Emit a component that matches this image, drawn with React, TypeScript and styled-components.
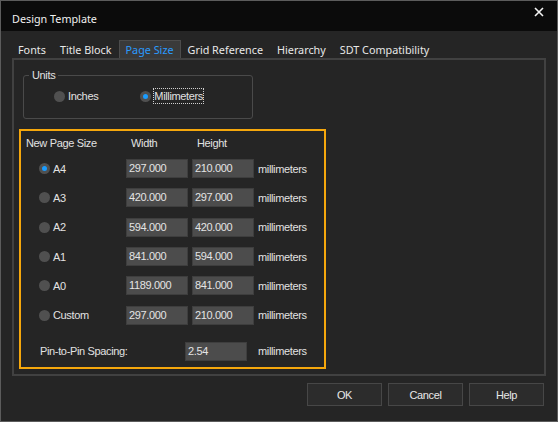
import React from 'react'
import styled, { createGlobalStyle } from 'styled-components'

const GlobalStyle = createGlobalStyle`
    html, body {
        margin: 0;
        padding: 0;
        background: #252525;
    }
`

const Window = styled.div`
    width: 558px;
    height: 422px;
    box-sizing: border-box;
    border: 1px solid #5c5c5c;
    background: #252525;
    display: flex;
    flex-direction: column;
    font-family: 'Liberation Sans', Arial, sans-serif;
    font-size: 11px;
    letter-spacing: -0.35px;
    color: #e2e2e2;
`

const TitleBar = styled.div`
    height: 30px;
    background: #0b0b0b;
    display: flex;
    align-items: center;
    justify-content: space-between;
    padding: 5px 12px 0 11px;
    box-sizing: border-box;
    font-family: 'Noto Sans', sans-serif;
    font-size: 10.8px;
    letter-spacing: 0;
    color: #f0f0f0;
`

const CloseButton = styled.div`
    width: 12px;
    height: 12px;
    margin-top: -14px;
    display: flex;
    align-items: center;
    justify-content: center;
`

const TabStrip = styled.div`
    display: flex;
    align-items: flex-end;
    height: 27px;
    padding-left: 10px;
    font-family: 'Noto Sans', sans-serif;
    font-size: 10.8px;
    letter-spacing: 0;
`

const Tab = styled.div<{ $active?: boolean }>`
    height: 18px;
    line-height: 17px;
    padding: 0 6px;
    box-sizing: border-box;
    color: ${p => (p.$active ? '#2a9bff' : '#e8e8e8')};
    background: ${p => (p.$active ? '#3a3a3a' : 'transparent')};
    border: 1px solid ${p => (p.$active ? '#4c4c4c' : 'transparent')};
    border-bottom: none;
`

const Panel = styled.div`
    margin: 0 11px 0 11px;
    height: 318px;
    box-sizing: border-box;
    border: 2px solid #414141;
    padding: 9px 0 0 5px;
`

const Group = styled.fieldset`
    margin: 0 0 0 4px;
    width: 230px;
    height: 50px;
    box-sizing: border-box;
    border: 1px solid #4a4a4a;
    border-radius: 3px;
    padding: 0;
    display: flex;
    align-items: center;
`

const Legend = styled.legend`
    padding: 0 3px;
    margin-left: 5px;
    color: #e2e2e2;
`

const RadioRow = styled.div<{ $left: number }>`
    display: flex;
    align-items: center;
    gap: 3px;
    margin: -7px 0 0 ${p => p.$left}px;
`

const RadioDot = styled.span<{ $checked?: boolean }>`
    width: 11px;
    height: 11px;
    border-radius: 50%;
    background: #505050;
    position: relative;
    flex-shrink: 0;
    &::after {
        content: '';
        display: ${p => (p.$checked ? 'block' : 'none')};
        position: absolute;
        left: 3px;
        top: 3px;
        width: 5px;
        height: 5px;
        border-radius: 50%;
        background: #1a9cff;
    }
`

const FocusLabel = styled.span`
    outline: 1px dotted #d0d0d0;
    padding: 1px 0;
`

const Frame = styled.div`
    margin-top: 10px;
    width: 307px;
    height: 240px;
    box-sizing: border-box;
    border: 2px solid #f5a70c;
`

const SizeGrid = styled.div`
    display: grid;
    grid-template-columns: 101px 62px 62px auto;
    column-gap: 4px;
    grid-template-rows: 23px;
    grid-auto-rows: 29.3px;
    align-items: center;
`

const HeadCell = styled.div<{ $pad: number }>`
    padding-left: ${p => p.$pad}px;
`

const SizeLabel = styled.div`
    display: flex;
    align-items: center;
    gap: 3px;
    padding-left: 18px;
`

const NumberBox = styled.div`
    width: 62px;
    height: 19px;
    box-sizing: border-box;
    background: #4c4c4c;
    border: 1px solid #3e3e3e;
    padding-left: 2px;
    line-height: 17px;
    color: #e4e4e4;
`

const Unit = styled.div<{ $gap?: number }>`
    margin-left: ${p => p.$gap ?? 0}px;
`

const PinRow = styled.div`
    display: flex;
    align-items: center;
    margin-top: 12px;
    padding-left: 19px;
`

const PinLabel = styled.div`
    width: 145px;
`

const ButtonBar = styled.div`
    display: flex;
    justify-content: flex-end;
    gap: 6px;
    padding: 7px 13px 0 0;
`

const Button = styled.div`
    width: 75px;
    height: 23px;
    box-sizing: border-box;
    background: #2c2c2c;
    border: 1px solid #474747;
    display: flex;
    align-items: center;
    justify-content: center;
    color: #e8e8e8;
`

const sizes = [
    { name: 'A4', w: '297.000', h: '210.000', checked: true },
    { name: 'A3', w: '420.000', h: '297.000' },
    { name: 'A2', w: '594.000', h: '420.000' },
    { name: 'A1', w: '841.000', h: '594.000' },
    { name: 'A0', w: '1189.000', h: '841.000' },
    { name: 'Custom', w: '297.000', h: '210.000' },
]

const tabs = ['Fonts', 'Title Block', 'Page Size', 'Grid Reference', 'Hierarchy', 'SDT Compatibility']

export default function App() {
    return (
        <>
            <GlobalStyle />
            <Window>
                <TitleBar>
                    <span>Design Template</span>
                    <CloseButton>
                        <svg width="10" height="10" viewBox="0 0 10 10">
                            <path d="M1 1 L9 9 M9 1 L1 9" stroke="#f4f4f4" strokeWidth="1.6" />
                        </svg>
                    </CloseButton>
                </TitleBar>
                <TabStrip>
                    {tabs.map(t => (
                        <Tab key={t} $active={t === 'Page Size'}>
                            {t}
                        </Tab>
                    ))}
                </TabStrip>
                <Panel>
                    <Group>
                        <Legend>Units</Legend>
                        <RadioRow $left={30}>
                            <RadioDot />
                            <span>Inches</span>
                        </RadioRow>
                        <RadioRow $left={42}>
                            <RadioDot $checked />
                            <FocusLabel>Millimeters</FocusLabel>
                        </RadioRow>
                    </Group>
                    <Frame>
                        <SizeGrid>
                            <HeadCell $pad={5}>New Page Size</HeadCell>
                            <HeadCell $pad={5}>Width</HeadCell>
                            <HeadCell $pad={5}>Height</HeadCell>
                            <div />
                            {sizes.map(s => (
                                <React.Fragment key={s.name}>
                                    <SizeLabel>
                                        <RadioDot $checked={s.checked} />
                                        <span>{s.name}</span>
                                    </SizeLabel>
                                    <NumberBox>{s.w}</NumberBox>
                                    <NumberBox>{s.h}</NumberBox>
                                    <Unit>millimeters</Unit>
                                </React.Fragment>
                            ))}
                        </SizeGrid>
                        <PinRow>
                            <PinLabel>Pin-to-Pin Spacing:</PinLabel>
                            <NumberBox>2.54</NumberBox>
                            <Unit $gap={11}>millimeters</Unit>
                        </PinRow>
                    </Frame>
                </Panel>
                <ButtonBar>
                    <Button>OK</Button>
                    <Button>Cancel</Button>
                    <Button>Help</Button>
                </ButtonBar>
            </Window>
        </>
    )
}
